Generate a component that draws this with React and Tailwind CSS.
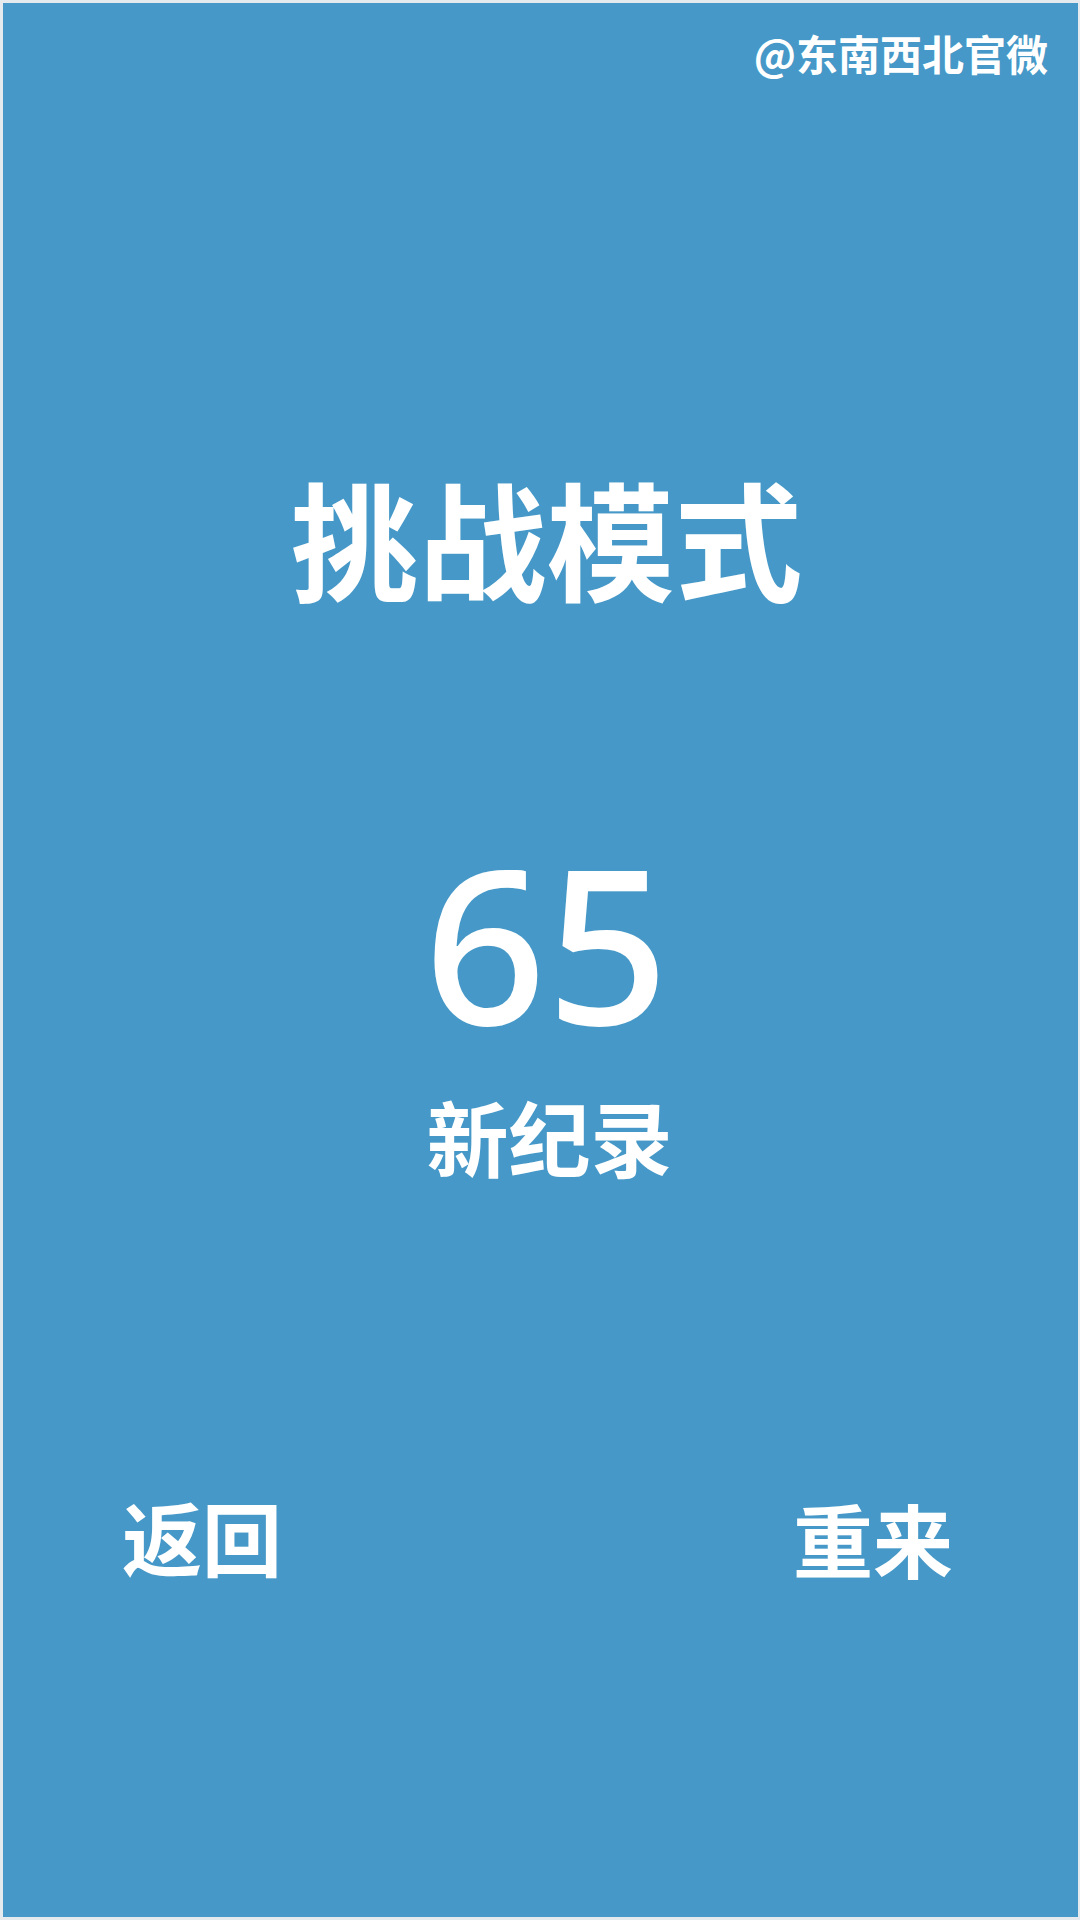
export default function App() {
  const cjk = { fontFamily: '"Noto Sans CJK SC", "Noto Sans", sans-serif' };
  return (
    <div className="w-[1080px] h-[1920px] bg-[#4598c7] border-t-[3px] border-l-[3px] border-r-[2px] border-b-[3px] border-[#e4eaee] flex flex-col text-white overflow-hidden" style={cjk}>
      <div className="pt-[29px] pr-[30px] flex justify-end">
        <span className="text-[42px] leading-[42px] font-bold">@东南西北官微</span>
      </div>
      <div className="flex flex-col items-center pl-[12px]">
        <div className="mt-[399px] text-[128px] leading-[128px] font-bold">挑战模式</div>
        <div className="mt-[234px] text-[214px] leading-[214px] font-medium" style={{ fontFamily: '"Noto Sans", sans-serif' }}>65</div>
        <div className="mt-[46px] pl-[6px] text-[82px] leading-[82px] font-bold">新纪录</div>
      </div>
      <div className="mt-[315px] pl-[119px] pr-[125px] flex justify-between">
        <button className="text-[80px] leading-[80px] font-bold">返回</button>
        <button className="text-[80px] leading-[80px] font-bold mt-[5px]">重来</button>
      </div>
    </div>
  );
}
